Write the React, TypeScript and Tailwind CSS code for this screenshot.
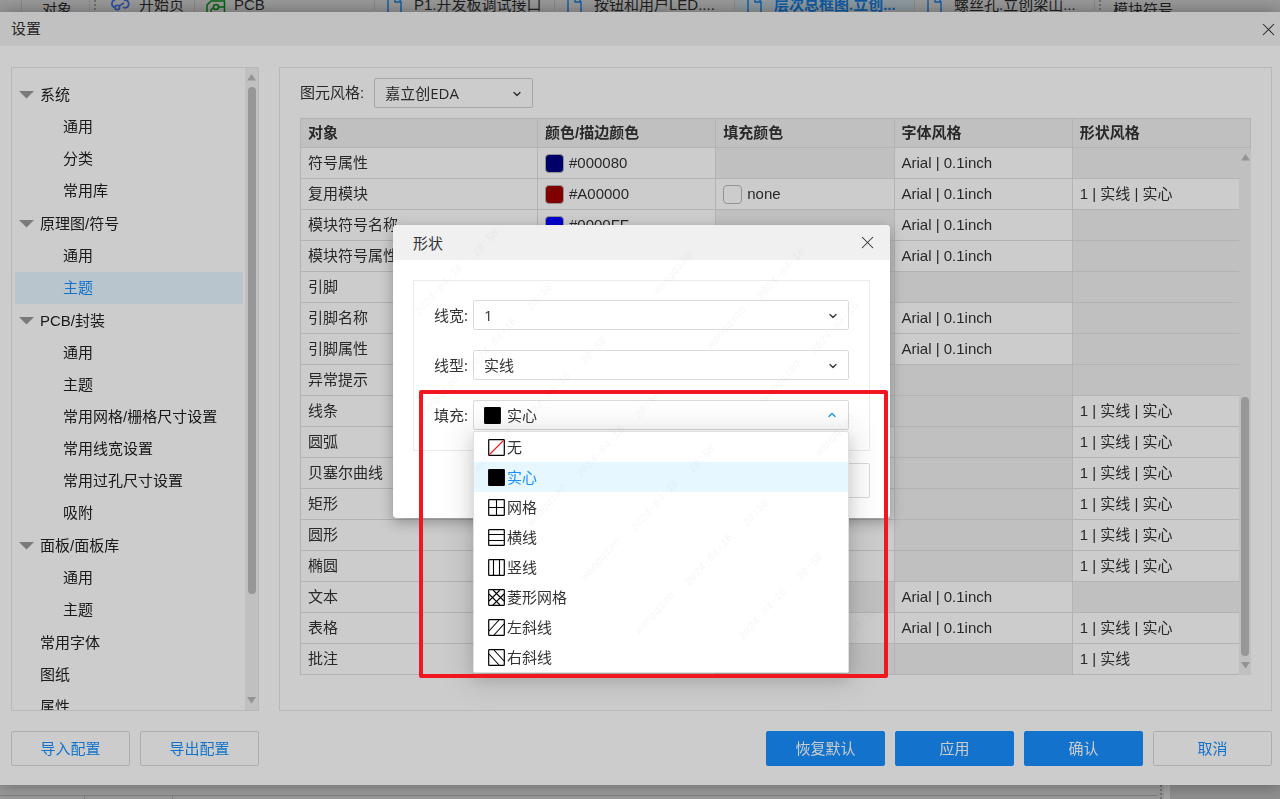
import React, { useState } from 'react';
import { ChevronDown, ChevronUp, X } from 'lucide-react';

type TreeNode = { label: string; children?: string[] };

const TREE: TreeNode[] = [
  { label: '系统', children: ['通用', '分类', '常用库'] },
  { label: '原理图/符号', children: ['通用', '主题'] },
  { label: 'PCB/封装', children: ['通用', '主题', '常用网格/栅格尺寸设置', '常用线宽设置', '常用过孔尺寸设置', '吸附'] },
  { label: '面板/面板库', children: ['通用', '主题'] },
];
const LEAVES = ['常用字体', '图纸', '属性'];

type Row = { name: string; stroke?: string; fill?: string; font?: string; shape?: string };

const ARIAL = 'Arial | 0.1inch';
const SOLID = '1 | 实线 | 实心';

const ROWS: Row[] = [
  { name: '符号属性', stroke: '#000080', font: ARIAL },
  { name: '复用模块', stroke: '#A00000', fill: 'none', font: ARIAL, shape: SOLID },
  { name: '模块符号名称', stroke: '#0000FF', font: ARIAL },
  { name: '模块符号属性', stroke: '#000080', font: ARIAL },
  { name: '引脚', stroke: '#880000' },
  { name: '引脚名称', stroke: '#0000FF', font: ARIAL },
  { name: '引脚属性', stroke: '#0000FF', font: ARIAL },
  { name: '异常提示', stroke: '#FF0000' },
  { name: '线条', stroke: '#000080', shape: SOLID },
  { name: '圆弧', stroke: '#000080', fill: 'none', shape: SOLID },
  { name: '贝塞尔曲线', stroke: '#000080', fill: 'none', shape: SOLID },
  { name: '矩形', stroke: '#000080', fill: 'none', shape: SOLID },
  { name: '圆形', stroke: '#000080', fill: 'none', shape: SOLID },
  { name: '椭圆', stroke: '#000080', fill: 'none', shape: SOLID },
  { name: '文本', stroke: '#000080', font: ARIAL },
  { name: '表格', stroke: '#000080', fill: 'none', font: ARIAL, shape: SOLID },
  { name: '批注', stroke: '#000080', shape: '1 | 实线' },
];

const FILLS: { label: string; d: string; kind?: 'none' | 'solid' }[] = [
  { label: '无', d: 'M1.5 15.5 15.5 1.5', kind: 'none' },
  { label: '实心', d: '', kind: 'solid' },
  { label: '网格', d: 'M8.5 1v15M1 8.5h15' },
  { label: '横线', d: 'M1 5.5h15M1 11.5h15' },
  { label: '竖线', d: 'M5.5 1v15M11.5 1v15' },
  { label: '菱形网格', d: 'M1 12 12 1M5 16 16 5M5 1 16 12M1 5 12 16' },
  { label: '左斜线', d: 'M1 12 11 1M6 16 16 5' },
  { label: '右斜线', d: 'M1 5 11 16M6 1 16 12' },
];

const FillIcon: React.FC<{ d: string; kind?: 'none' | 'solid' }> = ({ d, kind }) => (
  <svg width="17" height="17" viewBox="0 0 17 17" fill="none" className="shrink-0" aria-hidden="true">
    <rect x="0.7" y="0.7" width="15.6" height="15.6" rx="0.6" stroke="#000" strokeWidth="1.2" fill={kind === 'solid' ? '#000' : 'none'} />
    {d && <path d={d} stroke={kind === 'none' ? '#f5151c' : '#000'} strokeWidth="1.1" />}
  </svg>
);

const DocIcon = () => (
  <svg width="15" height="24" viewBox="0 0 15 24" fill="none" stroke="#1890ff" strokeWidth="1.4" className="shrink-0" aria-hidden="true">
    <path d="M1 23V1h8l5 8v14z" />
    <path d="M8 1v8h6" />
  </svg>
);

const Tab: React.FC<{ children: React.ReactNode; icon: React.ReactNode; active?: boolean }> = ({ children, icon, active }) => (
  <button className={`flex h-full w-[180px] shrink-0 items-center gap-3 border-r border-[#d8d8d8] pl-3 whitespace-nowrap ${active ? 'bg-[#dff2fb] font-bold text-[#1890ff]' : ''}`}>
    {icon}
    {children}
  </button>
);

const Grip = () => <span className="h-full w-0 border-l-2 border-dotted border-[#b0b0b0]" />;

const Workspace = () => (
  <div className="flex h-screen flex-col justify-between overflow-hidden bg-[#f0f0f0]">
    <div className="flex h-3 items-start overflow-hidden">
      <div className="flex h-[10px] w-full items-center">
        <span className="h-4 w-[22px] border-r border-[#d8d8d8]" />
        <span className="w-[68px] self-start border-r border-[#d8d8d8] pl-5 leading-[20px]">对象</span>
        <span className="flex h-full w-[10px] justify-center"><Grip /></span>
        <button className="flex w-[95px] items-center gap-[9px] border-r border-[#d8d8d8] pl-[10px] whitespace-nowrap">
          <svg width="20" height="16" viewBox="0 0 20 16" fill="none" stroke="#4a7cf5" strokeWidth="1.8" className="shrink-0" aria-hidden="true">
            <path d="M4.5 10.5a4 4 0 0 1 0-7.5c1-3 8-3 10 0a3.9 3.9 0 0 1 1.5 7.6c-1 .3-2.500 0-3-.6" />
            <circle cx="7.300" cy="10.500" r="2.200" />
            <path d="M9 9l5-3" />
          </svg>
          开始页
        </button>
        <Tab
          icon={
            <svg width="15" height="18" viewBox="0 0 15 18" fill="none" stroke="#0a9a1a" strokeWidth="1.5" className="shrink-0 overflow-visible" aria-hidden="true">
              <path d="M0 17V9l4-4h13.500v12" />
              <circle cx="9" cy="11" r="2.500" />
              <path d="M11.500 11h6M4 17v-3l2.500-2.500" />
            </svg>
          }
        >
          PCB
        </Tab>
        <Tab icon={<DocIcon />}>P1.开发板调试接口</Tab>
        <Tab icon={<DocIcon />}>按钮和用户LED....</Tab>
        <Tab icon={<DocIcon />} active>层次总框图.立创...</Tab>
        <Tab icon={<DocIcon />}>螺丝孔.立创梁山...</Tab>
        <span className="flex h-full w-[10px] justify-center"><Grip /></span>
        <span className="self-start pl-2 leading-[20px] whitespace-nowrap">模块符号</span>
      </div>
    </div>
    <div className="flex h-[14px]">
      <div className="flex flex-1 flex-col justify-end">
        <div className="flex h-1 border-t border-[#c8c8c8]">
          <span className="w-[85px] border-r border-[#c8c8c8]" />
          <span className="w-[88px] border-r border-[#c8c8c8]" />
        </div>
      </div>
      <span className="flex w-[6px] justify-center"><Grip /></span>
      <span className="w-[6px] bg-white" />
      <span className="w-[110px] bg-[#e0e0e0]" />
    </div>
  </div>
);

const Swatch: React.FC<{ value: string }> = ({ value }) => (
  <span className="flex items-center gap-[5px]">
    <span className="h-[19px] w-[19px] shrink-0 rounded border border-[#b8b8b8]" style={{ backgroundColor: value === 'none' ? '#fff' : value }} />
    {value}
  </span>
);

const ScrollBar: React.FC<{ thumb: string }> = ({ thumb }) => (
  <div className="flex h-full flex-col items-center justify-between py-[6px]">
    <svg width="9" height="7" viewBox="0 0 9 7" fill="#b9b9b9" aria-hidden="true"><path d="M4.5 0 9 6.5H0z" /></svg>
    <div className="flex w-2 flex-1 flex-col py-[6px]">
      <div className={`w-2 rounded-full bg-[#bdbdbd] ${thumb}`} />
    </div>
    <svg width="9" height="7" viewBox="0 0 9 7" fill="#b9b9b9" aria-hidden="true"><path d="M4.5 6.5 0 0h9z" /></svg>
  </div>
);

const Sidebar = () => {
  const [current, setCurrent] = useState('原理图/符号-主题');

  return (
    <aside className="flex w-[248px] shrink-0 overflow-hidden border border-[#e6e6e6]">
      <nav className="flex flex-1 flex-col gap-px overflow-hidden pt-[11px] pr-[2px] pl-[3px] text-[#222]">
        {TREE.map((node) => (
          <div key={node.label} className="flex shrink-0 flex-col">
            <button className="flex h-8 items-center gap-[6px] pl-1 text-left">
              <svg width="15" height="8" viewBox="0 0 15 8" fill="#999" aria-hidden="true"><path d="M0 0h15L7.5 7.5z" /></svg>
              {node.label}
            </button>
            {node.children?.map((child) => {
              const id = `${node.label}-${child}`;
              return (
                <button key={id} onClick={() => setCurrent(id)} className={`h-8 pl-12 text-left ${current === id ? 'bg-[#e6f7ff] text-[#1890ff]' : ''}`}>
                  {child}
                </button>
              );
            })}
          </div>
        ))}
        <div className="flex shrink-0 flex-col">
          {LEAVES.map((leaf) => (
            <button key={leaf} className="h-8 pl-[25px] text-left">{leaf}</button>
          ))}
        </div>
      </nav>
      <div className="w-[13px] shrink-0 bg-[#f0f0f0]">
        <ScrollBar thumb="h-[84%]" />
      </div>
    </aside>
  );
};

const Cell: React.FC<{ children?: React.ReactNode }> = ({ children }) => (
  <td className={`h-[31px] border-r border-b border-[#e0e0e0] p-0 pl-[7px] ${children ? '' : 'bg-[#f0f0f0]'}`}>{children}</td>
);

const ThemePanel = () => (
  <section className="min-w-0 flex-1 overflow-hidden border border-[#e6e6e6] px-5 pt-[10px]">
    <div className="flex items-center gap-[10px]">
      <label htmlFor="style">图元风格:</label>
      <div className="relative w-[159px] font-['Open_Sans','Noto_Sans_CJK_SC',sans-serif]">
        <select id="style" className="h-[30px] w-full appearance-none rounded-xs border border-[#d0d0d0] bg-white pl-[10px]">
          <option>嘉立创EDA</option>
        </select>
        <ChevronDown size={12} strokeWidth={2.5} className="pointer-events-none absolute top-[10px] right-[10px]" />
      </div>
    </div>

    <div className="relative mt-[10px]">
      <table className="w-full table-fixed border-separate border-spacing-0 border-t border-l border-[#e0e0e0] text-left">
        <thead>
          <tr className="bg-[#f0f0f0]">
            {['对象', '颜色/描边颜色', '填充颜色', '字体风格', '形状风格'].map((h, i) => (
              <th key={h} className={`h-[29px] border-r border-b border-[#e0e0e0] p-0 pl-[7px] font-bold ${i === 0 ? 'w-[237px]' : ''}`}>{h}</th>
            ))}
          </tr>
        </thead>
        <tbody>
          {ROWS.map((row) => (
            <tr key={row.name}>
              <Cell>{row.name}</Cell>
              <Cell>{row.stroke && <Swatch value={row.stroke} />}</Cell>
              <Cell>{row.fill && <Swatch value={row.fill} />}</Cell>
              <Cell>{row.font}</Cell>
              <Cell>{row.shape}</Cell>
            </tr>
          ))}
        </tbody>
      </table>
      <div className="absolute top-[30px] right-0 bottom-0 w-3 bg-[#f0f0f0]">
        <ScrollBar thumb="mt-auto h-[53%]" />
      </div>
    </div>
  </section>
);

const Button: React.FC<{ children: React.ReactNode; primary?: boolean }> = ({ children, primary }) => (
  <button className={`h-[35px] w-[119px] rounded-xs border ${primary ? 'border-[#1890ff] bg-[#1890ff] text-white' : 'border-[#d9d9d9] bg-white text-[#1890ff]'}`}>{children}</button>
);

const SettingsDialog = () => (
  <div role="dialog" aria-label="设置" className="fixed inset-x-0 top-3 bottom-[14px] flex flex-col bg-white shadow-[0_0_16px_rgba(0,0,0,0.35)]">
    <header className="flex h-[34px] shrink-0 items-center justify-between bg-[#f2f2f2] pr-px pl-[11px]">
      <h1>设置</h1>
      <button aria-label="关闭"><X size={21} strokeWidth={1.2} /></button>
    </header>
    <div className="flex min-h-0 flex-1 flex-col gap-5 pt-[21px] pr-2 pb-[19px] pl-[11px]">
      <div className="flex min-h-0 flex-1 gap-5">
        <Sidebar />
        <ThemePanel />
      </div>
      <footer className="flex shrink-0 gap-[10px]">
        <Button>导入配置</Button>
        <Button>导出配置</Button>
        <div className="flex-1" />
        <Button primary>恢复默认</Button>
        <Button primary>应用</Button>
        <Button primary>确认</Button>
        <Button>取消</Button>
      </footer>
    </div>
  </div>
);

const MARKS = [
  { text: 'wangqiao', x: -60, y: 66 },
  { text: '2024-04-16', x: -6, y: 13 },
  { text: '20:58', x: 41, y: -34 },
];

// user / date / time stamps running along the diagonals
const Watermark = () => (
  <svg className="pointer-events-none absolute inset-x-0 top-0 h-[447px] w-full" aria-hidden="true">
    <g fill="#808080" opacity="0.07" fontFamily="'Liberation Mono', monospace" fontStyle="italic" fontSize="11" textAnchor="middle">
      {MARKS.flatMap((m) =>
        [0, 1].flatMap((col) =>
          Array.from({ length: 9 }, (_, k) => {
            const x = m.x + col * 342 + k * 54;
            const y = m.y - col * 16 + k * 54;
            if (x < 10 || x > 490 || y < 10 || y > 440) return null;
            return <text key={`${m.text}-${col}-${k}`} x={x} y={y} transform={`rotate(-48 ${x} ${y})`}>{m.text}</text>;
          })
        )
      )}
    </g>
  </svg>
);

const Field: React.FC<{ id: string; label: string; value: string }> = ({ id, label, value }) => (
  <div className="flex items-center gap-[5px]">
    <label htmlFor={id}>{label}:</label>
    <div className="relative flex-1">
      <select id={id} className="block h-[30px] w-full appearance-none rounded-xs border border-[#d9d9d9] bg-white pl-[10px]">
        <option>{value}</option>
      </select>
      <ChevronDown size={12} strokeWidth={2.5} className="pointer-events-none absolute top-[10px] right-[10px]" />
    </div>
  </div>
);

const ShapeDialog = () => {
  const [fill, setFill] = useState(FILLS[1]);

  return (
    <div className="fixed inset-0 flex items-start justify-center bg-black/20 pt-[225px] pl-[3px]">
      <div role="dialog" aria-label="形状" className="relative w-[497px] rounded bg-white font-['Open_Sans','Noto_Sans_CJK_SC',sans-serif] shadow-[0_4px_14px_rgba(0,0,0,0.3)]">
        <header className="flex h-[35px] items-center justify-between rounded-t bg-[#f0f0f0] pr-3 pl-5">
          <h2>形状</h2>
          <button aria-label="关闭"><X size={21} strokeWidth={1.2} /></button>
        </header>

        <div className="px-5 py-5">
          <div className="flex flex-col gap-5 border border-[#ebebeb] px-5 pt-[19px] pb-5">
            <Field id="line-width" label="线宽" value="1" />
            <Field id="line-type" label="线型" value="实线" />
            <div className="flex items-center gap-[5px]">
              <label htmlFor="fill">填充:</label>
              <div className="relative flex-1">
                <button id="fill" aria-haspopup="listbox" aria-expanded="true" className="flex h-[30px] w-full items-center justify-between rounded-xs border border-[#d9d9d9] bg-white pr-[10px] pl-[10px]">
                  <span className="flex items-center gap-[6px]">
                    <FillIcon d={fill.d} kind={fill.kind} />
                    {fill.label}
                  </span>
                  <ChevronUp size={12} strokeWidth={2.5} className="text-[#1890ff]" />
                </button>
                <ul role="listbox" aria-label="填充" className="absolute inset-x-0 top-[31px] rounded-xs border border-[#e0e0e0] bg-white shadow-[0_3px_6px_-4px_rgba(0,0,0,0.12),0_6px_16px_rgba(0,0,0,0.12),0_4px_28px_8px_rgba(0,0,0,0.1)]">
                  {FILLS.map((f) => (
                    <li key={f.label} role="option" aria-selected={f === fill} onClick={() => setFill(f)} className={`flex h-[30px] items-center gap-[2px] pl-[14px] ${f === fill ? 'bg-[#e6f7ff] text-[#1890ff]' : ''}`}>
                      <FillIcon d={f.d} kind={f.kind} />
                      {f.label}
                    </li>
                  ))}
                </ul>
              </div>
            </div>
          </div>
          <div className="mt-3 flex justify-end">
            <Button>取消</Button>
          </div>
        </div>

        <Watermark />
        <div className="pointer-events-none absolute top-[165px] right-[2px] h-[288px] w-[469px] rounded-xs border-4 border-[#f2161e]" />
      </div>
    </div>
  );
};

export default function App() {
  return (
    <main className="font-['Liberation_Sans','Noto_Sans_CJK_SC',sans-serif] text-[15px] leading-[22px] text-[#333]">
      <Workspace />
      <div className="fixed inset-0 bg-black/20" />
      <SettingsDialog />
      <ShapeDialog />
    </main>
  );
}
